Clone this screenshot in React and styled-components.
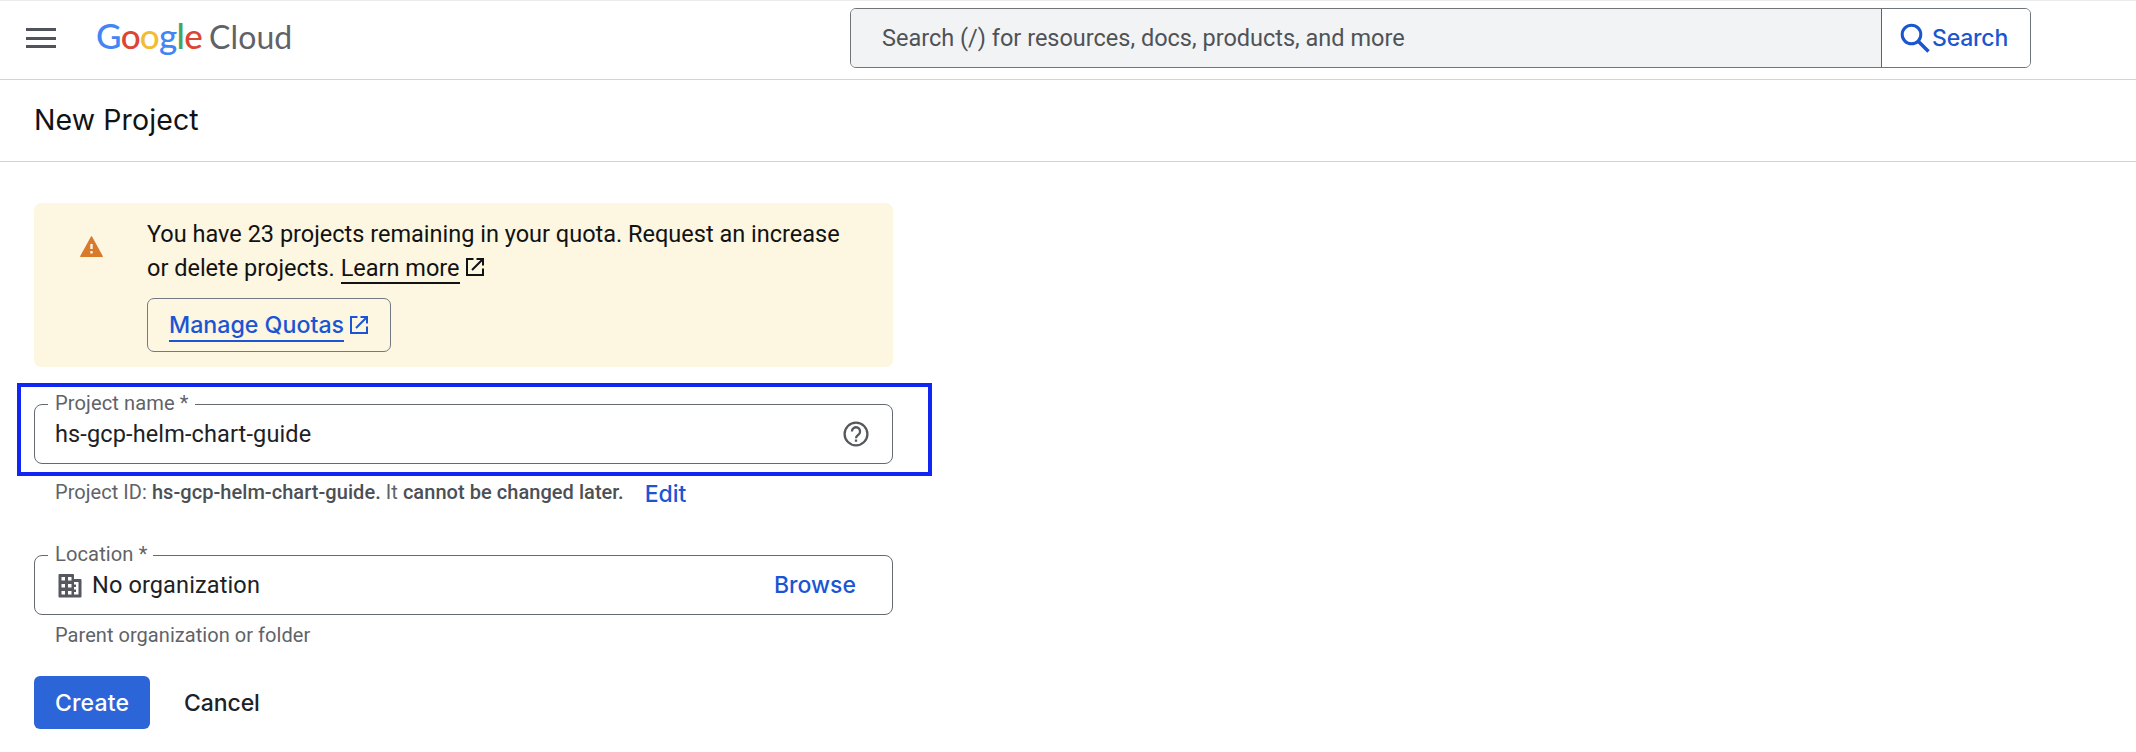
import React from 'react';
import styled, { createGlobalStyle } from 'styled-components';

const GlobalStyle = createGlobalStyle`
  *, *::before, *::after { box-sizing: border-box; }
  body {
    margin: 0;
    background: #fff;
    color: #202124;
    font-family: Roboto, sans-serif;
    font-size: 23.5px;
  }
`;

const Page = styled.div`
  min-height: 752px;
  overflow: hidden;
`;

const Header = styled.header`
  display: flex;
  align-items: flex-start;
  height: 80px;
  padding-left: 26px;
  border-top: 1px solid #ebebeb;
  border-bottom: 1px solid #d3d4d9;
`;

const MenuButton = styled.button`
  display: flex;
  flex-direction: column;
  gap: 5.5px;
  width: 30px;
  margin: 27px 0 0;
  padding: 0;
  border: 0;
  background: none;
`;

const MenuBar = styled.span`
  height: 3px;
  background: #505359;
`;

const Logo = styled.div`
  display: flex;
  align-items: baseline;
  width: 794px;
  height: 40px;
  margin-top: 14px;
  padding-left: 40px;
  font-family: Lato, sans-serif;
  line-height: 40px;
`;

const Brand = styled.span`
  font-size: 35px;
  font-weight: 500;
  letter-spacing: -0.7px;
`;

const Letter = styled.span`
  color: ${(p) => p.$color};
`;

const Product = styled.span`
  margin-left: 7px;
  font-size: 32px;
  letter-spacing: 0.1px;
  color: #5f6368;
`;

const SearchBar = styled.div`
  display: flex;
  width: 1181px;
  height: 60px;
  margin-top: 7px;
  border: 1px solid #70757a;
  border-radius: 6px;
  overflow: hidden;
`;

const SearchInput = styled.div`
  flex: 1;
  padding-left: 31px;
  background: #f1f3f4;
  color: #4f5257;
  line-height: 58px;
`;

const SearchButton = styled.button`
  display: flex;
  align-items: center;
  gap: 1px;
  width: 149px;
  padding: 0 0 0 18px;
  border: 0;
  border-left: 1px solid #5f6368;
  background: #fff;
  color: #1a56cf;
  font: 500 23px Inter, sans-serif;
  letter-spacing: -0.2px;
`;

const TitleBar = styled.div`
  height: 82px;
  padding-left: 34px;
  border-bottom: 1px solid #d3d4d9;
`;

const Title = styled.h1`
  margin: 0;
  color: #111214;
  font: 400 28.5px/79px Inter, sans-serif;
  letter-spacing: 0.1px;
`;

const Main = styled.main`
  width: 893px;
  padding: 41px 0 0 34px;
`;

const Banner = styled.section`
  display: flex;
  align-items: flex-start;
  height: 164px;
  padding: 14px 0 0 46px;
  border-radius: 7px;
  background: #fdf6e0;
  color: #111214;
`;

const WarningIcon = styled.svg`
  flex: none;
  width: 23px;
  height: 21px;
  margin-top: 19px;
`;

const BannerBody = styled.div`
  margin-left: 44px;
`;

const BannerText = styled.p`
  margin: 0;
  line-height: 34px;
  white-space: nowrap;
`;

const UnderlinedText = styled.span`
  display: inline-block;
  height: ${(p) => p.$height}px;
  line-height: ${(p) => p.$height}px;
  border-bottom: 2px solid currentColor;
`;

const LaunchIcon = styled.svg`
  width: 18px;
  height: 18px;
  margin-left: 6px;
  fill: none;
  stroke: currentColor;
  stroke-width: 2;
`;

const OutlineButton = styled.button`
  display: flex;
  align-items: center;
  width: 244px;
  height: 54px;
  margin-top: 13px;
  padding: 0 0 0 21px;
  border: 1.5px solid #747a85;
  border-radius: 7px;
  background: none;
  color: #1b55d4;
  font: 500 23.2px Inter, sans-serif;
`;

const Field = styled.div`
  position: relative;
  display: flex;
  align-items: center;
  height: 60px;
  margin-top: ${(p) => p.$gap}px;
  padding: 0 23px 0 20px;
  border: 1.5px solid #646a70;
  border-radius: 8px;
`;

const FieldLabel = styled.label`
  position: absolute;
  top: -13px;
  left: 13px;
  padding: 0 6px 0 7px;
  background: #fff;
  color: #5f6368;
  font-size: 20.1px;
  letter-spacing: 0.1px;
  line-height: 22px;
  white-space: nowrap;
`;

const FieldValue = styled.span`
  flex: 1;
  letter-spacing: 0.13px;
`;

const Highlight = styled.div`
  position: absolute;
  inset: -22px -40px -13px -18px;
  border: 4px solid #1026f3;
`;

const HelpIcon = styled.svg`
  width: 26px;
  height: 26px;
`;

const BuildingIcon = styled.svg`
  width: 24px;
  height: 24px;
  margin: 1px 10px 0 3px;
`;

const Hint = styled.div`
  display: flex;
  align-items: center;
  height: ${(p) => p.$height}px;
  padding-left: 21px;
  color: #5f6368;
  font-size: 20px;
  letter-spacing: 0.05px;
  white-space: pre;

  b { color: #4c5055; font-weight: 500; }
`;

const TextButton = styled.button`
  margin: 0;
  padding: 0;
  border: 0;
  background: none;
  color: ${(p) => p.$color};
  font: 500 23px Inter, sans-serif;
  letter-spacing: ${(p) => p.$spacing || 0}px;
`;

const EditButton = styled(TextButton)`
  margin: 4px 0 0 21px;
`;

const BrowseButton = styled(TextButton)`
  margin-right: 13px;
`;

const Actions = styled.div`
  display: flex;
  align-items: center;
  gap: 34px;
  margin-top: 21px;
`;

const PrimaryButton = styled(TextButton)`
  width: 116px;
  height: 53px;
  border-radius: 6px;
  background: #2c65d8;
`;

const letters = [
  ['G', '#4285f4'],
  ['o', '#dc4433'],
  ['o', '#f4bc33'],
  ['g', '#4285f4'],
  ['l', '#45a55a'],
  ['e', '#dc4433'],
];

function Launch() {
  return (
    <LaunchIcon viewBox="0 0 18 18">
      <path d="M7.500 1H1v16h16v-6.500M10.500 1H17v6.500M17 1 6 12" />
    </LaunchIcon>
  );
}

export default function App() {
  return (
    <Page>
      <GlobalStyle />
      <Header>
        <MenuButton aria-label="Menu">
          <MenuBar />
          <MenuBar />
          <MenuBar />
        </MenuButton>
        <Logo>
          <Brand>
            {letters.map(([char, color], i) => (
              <Letter key={i} $color={color}>{char}</Letter>
            ))}
          </Brand>
          <Product>Cloud</Product>
        </Logo>
        <SearchBar>
          <SearchInput>Search (/) for resources, docs, products, and more</SearchInput>
          <SearchButton>
            <svg width="31" height="31" viewBox="0 0 31 31" fill="none" stroke="currentColor" strokeWidth="3">
              <circle cx="11.500" cy="11.500" r="9.300" />
              <path d="m18 18 10.500 10.500" strokeWidth="3.500" />
            </svg>
            Search
          </SearchButton>
        </SearchBar>
      </Header>
      <TitleBar>
        <Title>New Project</Title>
      </TitleBar>
      <Main>
        <Banner>
          <WarningIcon viewBox="0 0 23 21">
            <path d="M11.500 .5 22.500 20.500H.5Z" fill="#d8792b" stroke="#d8792b" strokeLinejoin="round" />
            <path d="M11.500 8v5M11.500 15v2.500" stroke="#fdf6e0" strokeWidth="2.400" />
          </WarningIcon>
          <BannerBody>
            <BannerText>
              You have 23 projects remaining in your quota. Request an increase
              <br />
              or delete projects. <UnderlinedText $height={32}>Learn more</UnderlinedText>
              <Launch />
            </BannerText>
            <OutlineButton>
              <UnderlinedText $height={33}>Manage Quotas</UnderlinedText>
              <Launch />
            </OutlineButton>
          </BannerBody>
        </Banner>
        <Field $gap={37}>
          <FieldLabel>Project name *</FieldLabel>
          <FieldValue>hs-gcp-helm-chart-guide</FieldValue>
          <HelpIcon viewBox="0 0 26 26" fill="none" stroke="#55595e" strokeWidth="2.300">
            <circle cx="13" cy="13" r="11.400" />
            <path d="M8.900 10.400a4.100 4.100 0 1 1 6.900 3c-1.600 1.300-2.800 1.900-2.800 3.800M13 18.400v2.400" />
          </HelpIcon>
          <Highlight />
        </Field>
        <Hint $height={56}>
          <span>Project ID: <b>hs-gcp-helm-chart-guide.</b> It <b>cannot be changed later.</b></span>
          <EditButton $color="#1b55d4">Edit</EditButton>
        </Hint>
        <Field $gap={35}>
          <FieldLabel>Location *</FieldLabel>
          <BuildingIcon viewBox="0 0 24 24">
            <path
              fill="#55595f"
              fillRule="evenodd"
              d="M1.500 0H15q1 0 1 1v4h6.500q1 0 1 1v16.500q0 1-1 1H1.500q-1 0-1-1V1q0-1 1-1ZM3.500 3v3.500H7V3ZM10 3v3.500h3.500V3ZM3.500 10v3.500H7V10ZM10 10v3.500h3.500V10ZM3.500 17v3.500H7V17ZM10 17v3.500h3.500V17ZM16 8v2.500h2V13h-2v2.500h2V18h-2v2.500h4.500V8Z"
            />
          </BuildingIcon>
          <FieldValue>No organization</FieldValue>
          <BrowseButton $color="#1b55d4">Browse</BrowseButton>
        </Field>
        <Hint $height={40}>Parent organization or folder</Hint>
        <Actions>
          <PrimaryButton $color="#fff" $spacing={0.15}>Create</PrimaryButton>
          <TextButton $color="#202124" $spacing={-0.1}>Cancel</TextButton>
        </Actions>
      </Main>
    </Page>
  );
}
